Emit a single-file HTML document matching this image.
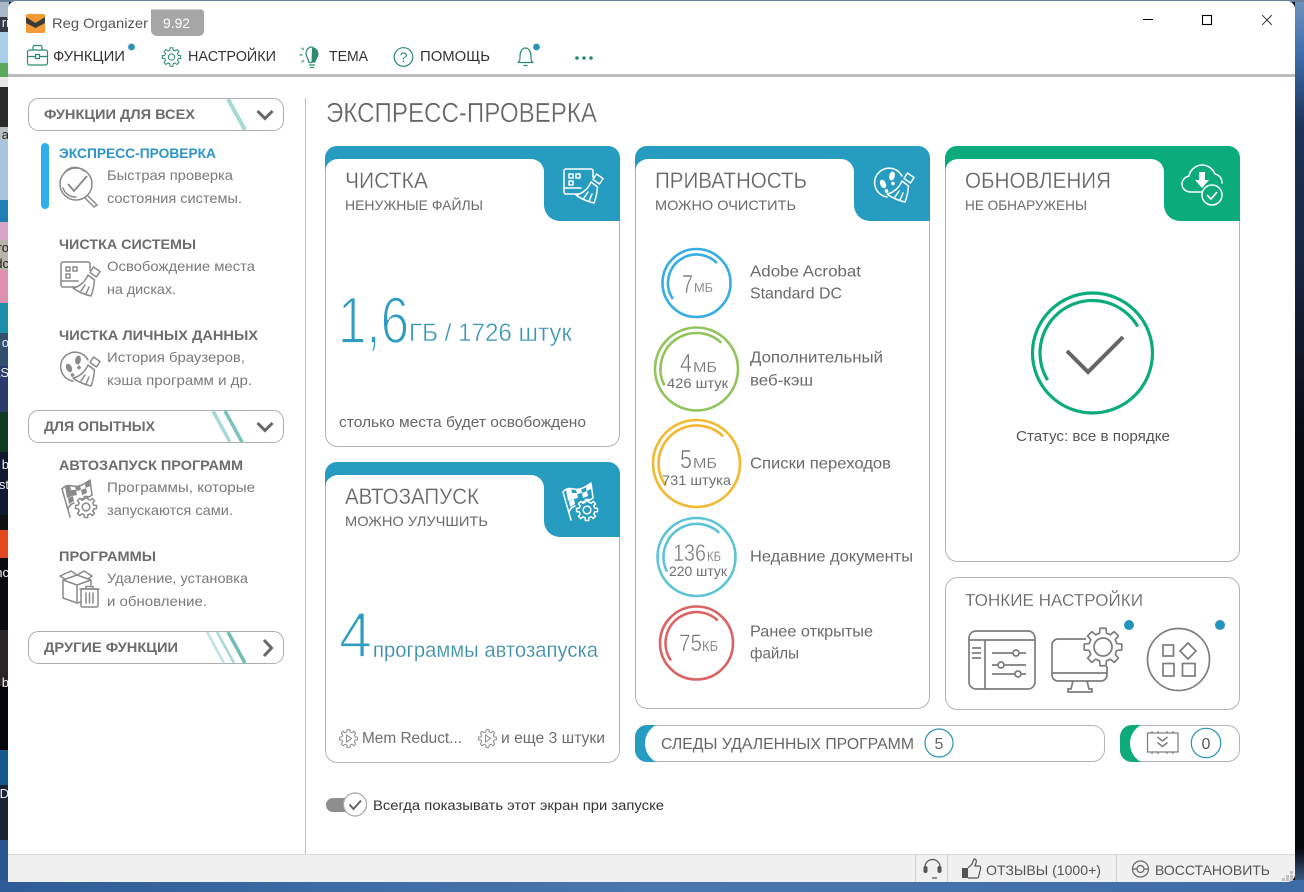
<!DOCTYPE html>
<html lang="ru"><head><meta charset="utf-8"><title>Reg Organizer</title>
<style>
html,body{margin:0;padding:0;width:1304px;height:892px;overflow:hidden;background:#0a1020}
svg{display:block;position:absolute;left:0;top:0}
text{font-family:"Liberation Sans",sans-serif;white-space:pre}
.m{font-size:15px;fill:#333;transform:translateY(-1px)}
.h{font-size:14px;font-weight:bold;fill:#6c6c6c;transform:translateY(-1px)}
.d{font-size:14px;fill:#7a7a7a}
.ct{font-size:22px;fill:#666;stroke:#fff;stroke-width:.25;transform:translateY(-1px)}
.cs{font-size:14px;fill:#6a6a6a;transform:translateY(-1px)}
.l{font-size:16px;fill:#6a6a6a;transform:translateY(-.6px)}
.n{fill:#777;stroke:#fff;stroke-width:.5}
.u{fill:#777;stroke:#fff;stroke-width:.15}
.sm{font-size:14px;fill:#666}
.ic{fill:none;stroke:currentColor;stroke-width:1.5;stroke-linejoin:round;stroke-linecap:round}
.nsc{vector-effect:non-scaling-stroke}
</style></head><body>
<svg width="1304" height="892" viewBox="0 0 1304 892" xmlns="http://www.w3.org/2000/svg">
<defs>
<linearGradient id="rs" x1="0" y1="0" x2="0" y2="1"><stop offset="0" stop-color="#6f92bd"/><stop offset=".06" stop-color="#3c6fae"/><stop offset=".14" stop-color="#1c3258"/><stop offset=".3" stop-color="#16243f"/><stop offset=".5" stop-color="#07090f"/><stop offset=".95" stop-color="#05060a"/><stop offset="1" stop-color="#4c78ae"/></linearGradient>
<linearGradient id="bs" x1="0" y1="0" x2="1" y2="0"><stop offset="0" stop-color="#2f5c98"/><stop offset=".5" stop-color="#4a78ad"/><stop offset="1" stop-color="#3e6ba6"/></linearGradient>
<path id="hdr" d="M0 12A12 12 0 0 1 12 0H283A12 12 0 0 1 295 12V75H235A16 16 0 0 1 219 59V26A13 13 0 0 0 206 13H13A13 13 0 0 0 0 26Z"/>
<path id="gear" class="nsc" fill="none" stroke="currentColor" stroke-linejoin="round" d="M7.28 -1.81L9.88 -1.56L9.88 1.56L7.28 1.81L6.43 3.86L8.09 5.88L5.88 8.09L3.86 6.43L1.81 7.28L1.56 9.88L-1.56 9.88L-1.81 7.28L-3.86 6.43L-5.88 8.09L-8.09 5.88L-6.43 3.86L-7.28 1.81L-9.88 1.56L-9.88 -1.56L-7.28 -1.81L-6.43 -3.86L-8.09 -5.88L-5.88 -8.09L-3.86 -6.43L-1.81 -7.28L-1.56 -9.88L1.56 -9.88L1.81 -7.28L3.86 -6.43L5.88 -8.09L8.09 -5.88L6.43 -3.86Z"/>
<g id="broom" class="ic">
<path d="M33.500 6L40 10.500L36.500 16L30 11.500Z"/><path d="M28 14L34.500 19C34 25 33 30 31 35C26 34 18 31 13 27C19 26 25 21 28 14Z"/><path d="M25 24L21 30M29 26L26 33"/>
</g>
<g id="iScreen">
<g class="ic"><path d="M16 26H3a2 2 0 0 1-2-2V3a2 2 0 0 1 2-2H28a2 2 0 0 1 2 2V9"/><path d="M1 20H18"/><rect x="6" y="6" width="4" height="4"/><rect x="13" y="6" width="4" height="4"/><rect x="6" y="13" width="4" height="4"/></g>
<use href="#broom"/>
</g>
<g id="iFoot">
<path class="ic" d="M13 30A14.500 14.500 0 1 1 28 9"/>
<g fill="currentColor" stroke="none"><ellipse cx="9" cy="17" rx="2.800" ry="4.500" transform="rotate(-25 9 17)"/><ellipse cx="12.500" cy="24" rx="1.800" ry="1.900"/><ellipse cx="18" cy="9" rx="2.800" ry="4.500" transform="rotate(12 18 9)"/><ellipse cx="19" cy="16.500" rx="1.800" ry="1.900"/></g>
<use href="#broom"/>
</g>
<g id="iFlag">
<path class="ic" d="M2 10L10 38M2 10C8 3 13 9 19 7C23 6 26 4 30 1L32 16C28 19 25 20 21 20M8 30C9 27 11 25 14 24"/>
<g fill="currentColor" stroke="none"><path d="M5 8l5-2l1 5l-5 2zM15 7l5-1l1 5l-5 1zM25 4l5-2l.500 5l-5 2zM11 11l5 0l1 5l-5 1zM21 11l5-2l1 5l-5 2zM6 13l5-2l1 6l-5 2zM8 19l5-2l1 5l-5 3z"/></g>
<g transform="translate(26 28) scale(1.060)"><use href="#gear" stroke-width="1.500"/><circle class="nsc" r="3.600" fill="none" stroke="currentColor" stroke-width="1.500"/></g>
</g>
</defs>

<!-- desktop behind -->
<rect width="1304" height="892" fill="#0c1426"/>
<rect x="0" y="0" width="9" height="17" fill="#a8b8c8"/><rect x="0" y="17" width="9" height="15" fill="#333a44"/><rect x="0" y="32" width="9" height="31" fill="#a9cfe8"/><rect x="0" y="63" width="9" height="14" fill="#5aa85c"/><rect x="0" y="77" width="9" height="10" fill="#e8e8e8"/><rect x="0" y="87" width="9" height="40" fill="#2a2a2a"/><rect x="0" y="127" width="9" height="13" fill="#b9bfc6"/><rect x="0" y="140" width="9" height="60" fill="#a9c4dc"/><rect x="0" y="200" width="9" height="22" fill="#1f7eb4"/><rect x="0" y="222" width="9" height="18" fill="#d9a6c8"/><rect x="0" y="240" width="9" height="30" fill="#b9b4a8"/><rect x="0" y="270" width="9" height="33" fill="#dc8fb0"/><rect x="0" y="303" width="9" height="30" fill="#1c90a8"/><rect x="0" y="333" width="9" height="33" fill="#33506e"/><rect x="0" y="366" width="9" height="46" fill="#2a3a6c"/><rect x="0" y="412" width="9" height="40" fill="#0f3a20"/><rect x="0" y="452" width="9" height="63" fill="#101830"/><rect x="0" y="515" width="9" height="15" fill="#111"/><rect x="0" y="530" width="9" height="28" fill="#e2491f"/><rect x="0" y="558" width="9" height="72" fill="#0a0a10"/><rect x="0" y="630" width="9" height="56" fill="#2b2426"/><rect x="0" y="686" width="9" height="64" fill="#06070c"/><rect x="0" y="750" width="9" height="35" fill="#165a8c"/><rect x="0" y="785" width="9" height="55" fill="#1a2434"/><rect x="0" y="840" width="9" height="52" fill="#2a5590"/>
<g font-size="13"><text x="9" y="27" text-anchor="end" fill="#eee">ri</text><text x="9" y="139" text-anchor="end" fill="#222">a</text><text x="9" y="252" text-anchor="end" fill="#222">ro</text><text x="9" y="268" text-anchor="end" fill="#222">dc</text><text x="9" y="347" text-anchor="end" fill="#eee">o</text><text x="9" y="377" text-anchor="end" fill="#eee">tS</text><text x="9" y="469" text-anchor="end" fill="#eee">b</text><text x="9" y="489" text-anchor="end" fill="#eee">st</text><text x="9" y="577" text-anchor="end" fill="#eee">nc</text><text x="9" y="687" text-anchor="end" fill="#eee">b</text><text x="9" y="798" text-anchor="end" fill="#eee">D</text></g>
<rect x="1295" y="0" width="9" height="892" fill="url(#rs)"/>
<rect x="0" y="880" width="1304" height="12" fill="url(#bs)"/>
<rect x="0" y="0" width="1304" height="2" fill="#6a7f9a"/>

<!-- window -->
<path d="M16 1H1287a8 8 0 0 1 8 8V874a8 8 0 0 1-8 8H8V9a8 8 0 0 1 8-8Z" fill="#fff"/>

<!-- title -->
<rect x="26" y="14" width="19" height="19" rx="1.500" fill="#f39a34"/>
<path d="M26 17l9.500 6l9.500-6v6l-9.500 5l-9.500-5z" fill="#3b3b3b"/>
<text x="52" y="28" font-size="14" fill="#555" textLength="96" lengthAdjust="spacingAndGlyphs">Reg Organizer</text>
<path d="M151 9.500H201a3 3 0 0 1 3 3V31a5 5 0 0 1-5 5H157a6 6 0 0 1-6-6Z" fill="#a6a6a6"/>
<text x="163" y="28" font-size="14" fill="#fff" textLength="27" lengthAdjust="spacingAndGlyphs">9.92</text>
<path d="M1143 19.500h10" stroke="#000" stroke-width="1"/>
<rect x="1202.500" y="15.500" width="9" height="9" fill="none" stroke="#000" stroke-width="1.100"/>
<path d="M1262 15l10 10M1272 15l-10 10" stroke="#111" stroke-width=".8"/>

<!-- menu -->
<g color="#2c8a72">
<g class="ic" stroke-width="1.200" style="stroke-width:1.200"><rect x="27.500" y="50" width="20" height="15" rx="2"/><path d="M33 50v-3a1.500 1.500 0 0 1 1.500-1.500h6a1.500 1.500 0 0 1 1.500 1.500v3M27.500 56.500h8M39.500 56.500h8"/><rect x="35.500" y="54.500" width="4" height="4"/></g>
<g transform="translate(171.500 57) scale(.93)" stroke-width="1"><use href="#gear"/><circle class="nsc" r="3.400" fill="none" stroke="currentColor"/></g>
<path d="M312 47c4 .500 6.500 3.500 6.500 7c0 3.500-2.700 5-3 8.500h-4z" fill="currentColor"/><path class="ic" style="stroke-width:1.200" d="M312 47c-3.500 0-6 3-6 6.500c0 3.500 2.500 5 3 9h3M309.500 65h5M310.500 67.500h3M302 48l1.500 1.500M300 55h2M302 62l1.500-1.500"/>
<g class="ic" style="stroke-width:1.200"><circle cx="403.500" cy="57" r="9.300"/></g>
<text x="403.500" y="62" font-size="14" text-anchor="middle" fill="#2c8a72">?</text>
<path class="ic" style="stroke-width:1.200" d="M518 62.500c2-1.500 2-3 2-6.500c0-4 2-8 5.500-8s5.500 4 5.500 8c0 3.500 0 5 2 6.500zM524 65.500h3"/>
<circle cx="577" cy="58" r="1.800" fill="currentColor"/><circle cx="584" cy="58" r="1.800" fill="currentColor"/><circle cx="591" cy="58" r="1.800" fill="currentColor"/>
</g>
<text class="m" x="53" y="62" textLength="72" lengthAdjust="spacingAndGlyphs">ФУНКЦИИ</text>
<circle cx="131.500" cy="47" r="3.400" fill="#2a93b8"/>
<text class="m" x="188" y="62" textLength="88" lengthAdjust="spacingAndGlyphs">НАСТРОЙКИ</text>
<text class="m" x="329" y="62" textLength="39" lengthAdjust="spacingAndGlyphs">ТЕМА</text>
<text class="m" x="420" y="62" textLength="70" lengthAdjust="spacingAndGlyphs">ПОМОЩЬ</text>
<circle cx="536.500" cy="47" r="3.400" fill="#2a93b8"/>
<rect x="8" y="74" width="1287" height="3" fill="#bcbcbc"/>

<!-- sidebar pills -->
<g fill="#fff" stroke="#aeaeae"><rect x="28.500" y="98.500" width="255" height="32" rx="10"/><rect x="28.500" y="410.500" width="255" height="32" rx="10"/><rect x="28.500" y="631.500" width="255" height="32" rx="10"/></g>
<path d="M228 99l17 31" stroke="#a9d9d5" stroke-width="4"/>
<path d="M213 411l17 31" stroke="#a9d9d5" stroke-width="3.500"/><path d="M225 411l17 31" stroke="#79c4bb" stroke-width="3.500"/>
<path d="M207 632l17 31" stroke="#bfe3df" stroke-width="2.500"/><path d="M217 632l17 31" stroke="#a9d9d5" stroke-width="2.500"/><path d="M228 632l17 31" stroke="#6fbfb5" stroke-width="3.500"/>
<g fill="none" stroke="#666" stroke-width="3"><path d="M257.500 111l7.500 7.500l7.500-7.500M257.500 423l7.500 7.500l7.500-7.500M264 640l7.500 8l-7.500 8"/></g>
<text class="h" x="44" y="120" textLength="151" lengthAdjust="spacingAndGlyphs">ФУНКЦИИ ДЛЯ ВСЕХ</text>
<text class="h" x="44" y="432" textLength="111" lengthAdjust="spacingAndGlyphs">ДЛЯ ОПЫТНЫХ</text>
<text class="h" x="44" y="653" textLength="134" lengthAdjust="spacingAndGlyphs">ДРУГИЕ ФУНКЦИИ</text>

<!-- sidebar items -->
<rect x="41" y="143" width="8" height="66" rx="4" fill="#2eaeea"/>
<text class="h" x="59" y="159" textLength="157" lengthAdjust="spacingAndGlyphs" style="fill:#2d95c8">ЭКСПРЕСС-ПРОВЕРКА</text>
<text class="d" x="107" y="180" textLength="126" lengthAdjust="spacingAndGlyphs">Быстрая проверка</text>
<text class="d" x="107" y="203" textLength="135" lengthAdjust="spacingAndGlyphs">состояния системы.</text>
<g color="#8a8a8a"><g class="ic"><circle cx="76" cy="184" r="16"/><path d="M65 172a13 13 0 0 1 19-1M63 188a13 13 0 0 0 13 9"/><path d="M88 196l9 9l-3 2l-9-9"/></g><path d="M68 184l6 7l13-15" fill="none" stroke="#888" stroke-width="1.800"/></g>

<text class="h" x="59" y="250" textLength="137" lengthAdjust="spacingAndGlyphs">ЧИСТКА СИСТЕМЫ</text>
<text class="d" x="107" y="271" textLength="148" lengthAdjust="spacingAndGlyphs">Освобождение места</text>
<text class="d" x="107" y="294" textLength="69" lengthAdjust="spacingAndGlyphs">на дисках.</text>
<use href="#iScreen" x="60" y="261" color="#8a8a8a"/>

<text class="h" x="59" y="341" textLength="199" lengthAdjust="spacingAndGlyphs">ЧИСТКА ЛИЧНЫХ ДАННЫХ</text>
<text class="d" x="107" y="362" textLength="138" lengthAdjust="spacingAndGlyphs">История браузеров,</text>
<text class="d" x="107" y="385" textLength="145" lengthAdjust="spacingAndGlyphs">кэша программ и др.</text>
<use href="#iFoot" x="60" y="351" color="#8a8a8a"/>

<text class="h" x="59" y="471" textLength="184" lengthAdjust="spacingAndGlyphs">АВТОЗАПУСК ПРОГРАММ</text>
<text class="d" x="107" y="492" textLength="148" lengthAdjust="spacingAndGlyphs">Программы, которые</text>
<text class="d" x="107" y="515" textLength="126" lengthAdjust="spacingAndGlyphs">запускаются сами.</text>
<use href="#iFlag" x="60" y="479" color="#8a8a8a"/>

<text class="h" x="59" y="562" textLength="97" lengthAdjust="spacingAndGlyphs">ПРОГРАММЫ</text>
<text class="d" x="107" y="583" textLength="141" lengthAdjust="spacingAndGlyphs">Удаление, установка</text>
<text class="d" x="107" y="606" textLength="100" lengthAdjust="spacingAndGlyphs">и обновление.</text>
<g color="#8a8a8a" class="ic"><path d="M63 580l14 5l14-5l-14-5zM63 580v18l14 5v-18M91 580v5M77 575l-6-4l-11 5l5 3M77 575l7-4l8 5l-4 3M77 603l4-1"/><rect x="81" y="589" width="17" height="18" rx="1.500"/><path d="M80 589h19M86 589v-2.500h7v2.500M86 593v10M89.500 593v10M93 593v10"/></g>

<rect x="305" y="98" width="1" height="756" fill="#bdbdbd"/>
<text x="326" y="122" font-size="28" fill="#666" stroke="#fff" stroke-width=".35" textLength="271" lengthAdjust="spacingAndGlyphs">ЭКСПРЕСС-ПРОВЕРКА</text>

<!-- cards -->
<g fill="#fff" stroke="#b4b4b4"><rect x="325.500" y="146.500" width="294" height="300" rx="12"/><rect x="325.500" y="462.500" width="294" height="300" rx="12"/><rect x="635.500" y="146.500" width="294" height="562" rx="12"/><rect x="945.500" y="146.500" width="294" height="415" rx="12"/><rect x="945.500" y="577.500" width="294" height="132" rx="12"/></g>
<use href="#hdr" x="325" y="146" fill="#269cc0"/>
<use href="#hdr" x="325" y="462" fill="#269cc0"/>
<use href="#hdr" x="635" y="146" fill="#269cc0"/>
<use href="#hdr" x="945" y="146" fill="#0bab7c"/>

<use href="#iScreen" x="563" y="168" color="#fff"/>
<use href="#iFlag" x="561" y="482" color="#fff"/>
<use href="#iFoot" x="874" y="167" color="#fff"/>
<g color="#fff"><path class="ic" d="M1202 192H1191C1186 192 1182 189 1182 184C1182 180 1185 177 1189 176C1190 170 1196 165 1202 165C1208 165 1213 169 1215 174C1219 175 1222 178 1222 183"/><path d="M1199 172h6v8h4l-7 8l-7-8h4z" fill="#fff"/><circle cx="1212" cy="195" r="10" fill="#0bab7c" stroke="#fff" stroke-width="1.500"/><path d="M1207 195l4 4l6-7" fill="none" stroke="#fff" stroke-width="1.700"/></g>

<text class="ct" x="345" y="189" textLength="83" lengthAdjust="spacingAndGlyphs">ЧИСТКА</text>
<text class="cs" x="345" y="211" textLength="138" lengthAdjust="spacingAndGlyphs">НЕНУЖНЫЕ ФАЙЛЫ</text>
<text x="338" y="343" font-size="66" fill="#2d9cc0" stroke="#fff" stroke-width="1.800" textLength="71" lengthAdjust="spacingAndGlyphs">1,6</text>
<text x="409" y="341" font-size="25" fill="#3b96b4" stroke="#fff" stroke-width=".4" textLength="163" lengthAdjust="spacingAndGlyphs">ГБ / 1726 штук</text>
<text x="339" y="427" font-size="15" fill="#666" textLength="247" lengthAdjust="spacingAndGlyphs">столько места будет освобождено</text>

<text class="ct" x="345" y="505" textLength="134" lengthAdjust="spacingAndGlyphs">АВТОЗАПУСК</text>
<text class="cs" x="345" y="527" textLength="143" lengthAdjust="spacingAndGlyphs">МОЖНО УЛУЧШИТЬ</text>
<text x="339" y="657" font-size="64" fill="#2d9cc0" stroke="#fff" stroke-width="1.800" textLength="33" lengthAdjust="spacingAndGlyphs">4</text>
<text x="373" y="657" font-size="21" fill="#3d8ea8" stroke="#fff" stroke-width=".2" textLength="225" lengthAdjust="spacingAndGlyphs">программы автозапуска</text>
<g color="#8a8a8a" stroke-width="1"><g transform="translate(348.500 738.500) scale(.9)"><use href="#gear"/></g><path d="M346.500 735l5 3.500l-5 3.500z" fill="none" stroke="#8a8a8a"/><g transform="translate(487.500 738.500) scale(.9)"><use href="#gear"/></g><path d="M485.500 735l5 3.500l-5 3.500z" fill="none" stroke="#8a8a8a"/></g>
<text x="362" y="743" font-size="15.500" fill="#6e6e6e" textLength="100" lengthAdjust="spacingAndGlyphs">Mem Reduct...</text>
<text x="501" y="743" font-size="15.500" fill="#6e6e6e" textLength="104" lengthAdjust="spacingAndGlyphs">и еще 3 штуки</text>

<!-- toggle -->
<rect x="326" y="798" width="30" height="14" rx="7" fill="#8e8e8e"/>
<circle cx="355" cy="804.500" r="11.500" fill="#fff" stroke="#a5a5a5" stroke-width="1.200"/>
<path d="M349.500 804.500l4 4.500l7.500-8.500" fill="none" stroke="#666" stroke-width="2"/>
<text x="373" y="810" font-size="14" fill="#333" textLength="291" lengthAdjust="spacingAndGlyphs">Всегда показывать этот экран при запуске</text>

<!-- privacy -->
<text class="ct" x="655" y="189" textLength="152" lengthAdjust="spacingAndGlyphs">ПРИВАТНОСТЬ</text>
<text class="cs" x="655" y="211" textLength="141" lengthAdjust="spacingAndGlyphs">МОЖНО ОЧИСТИТЬ</text>
<g fill="none" stroke-width="2.600">
<g stroke="#36aee3"><circle cx="696.500" cy="283" r="34"/><path d="M716.900 263.100A28.500 28.500 0 0 0 682.250 258.320A28.500 28.500 0 0 0 672.900 299"/></g>
<g stroke="#92c45c"><circle cx="696.500" cy="369" r="41.500"/><path d="M721.200 342.800A36 36 0 0 0 678.500 337.800A36 36 0 0 0 664.400 385.300"/></g>
<g stroke="#f3b82f"><circle cx="696.500" cy="463.500" r="43.500"/><path d="M723.100 436.300A38 38 0 0 0 677.500 430.600A38 38 0 0 0 665.600 485.600"/></g>
<g stroke="#5dc4d6"><circle cx="696.500" cy="557" r="39"/><path d="M719.200 532.800A33 33 0 0 0 680 528.400A33 33 0 0 0 667 571.700"/></g>
<g stroke="#dc6363"><circle cx="696.500" cy="643" r="36.500"/><path d="M717.800 620.500A31 31 0 0 0 681 616.200A31 31 0 0 0 670.900 660.500"/></g>
</g>
<text class="n" x="682" y="293" font-size="26" textLength="11" lengthAdjust="spacingAndGlyphs">7</text><text class="u" x="694" y="292" font-size="13" textLength="19" lengthAdjust="spacingAndGlyphs">МБ</text>
<text class="n" x="680" y="372" font-size="26" textLength="12" lengthAdjust="spacingAndGlyphs">4</text><text class="u" x="693" y="372" font-size="15" textLength="24" lengthAdjust="spacingAndGlyphs">МБ</text>
<text x="667" y="388" font-size="14" fill="#6e6e6e" textLength="61" lengthAdjust="spacingAndGlyphs">426 штук</text>
<text class="n" x="680" y="468" font-size="26" textLength="12" lengthAdjust="spacingAndGlyphs">5</text><text class="u" x="693" y="468" font-size="15" textLength="24" lengthAdjust="spacingAndGlyphs">МБ</text>
<text x="662" y="485" font-size="14" fill="#6e6e6e" textLength="69" lengthAdjust="spacingAndGlyphs">731 штука</text>
<text class="n" x="673" y="561" font-size="24" textLength="33" lengthAdjust="spacingAndGlyphs">136</text><text class="u" x="707" y="561" font-size="14" textLength="14" lengthAdjust="spacingAndGlyphs">КБ</text>
<text x="669" y="576" font-size="14" fill="#6e6e6e" textLength="58" lengthAdjust="spacingAndGlyphs">220 штук</text>
<text class="n" x="679" y="651" font-size="24" textLength="23" lengthAdjust="spacingAndGlyphs">75</text><text class="u" x="702" y="651" font-size="15" textLength="16" lengthAdjust="spacingAndGlyphs">КБ</text>
<text class="l" x="750" y="277" textLength="111" lengthAdjust="spacingAndGlyphs">Adobe Acrobat</text>
<text class="l" x="750" y="299" textLength="92" lengthAdjust="spacingAndGlyphs">Standard DC</text>
<text class="l" x="750" y="363" textLength="133" lengthAdjust="spacingAndGlyphs">Дополнительный</text>
<text class="l" x="750" y="386" textLength="63" lengthAdjust="spacingAndGlyphs">веб-кэш</text>
<text class="l" x="750" y="469" textLength="141" lengthAdjust="spacingAndGlyphs">Списки переходов</text>
<text class="l" x="750" y="562" textLength="163" lengthAdjust="spacingAndGlyphs">Недавние документы</text>
<text class="l" x="750" y="637" textLength="123" lengthAdjust="spacingAndGlyphs">Ранее открытые</text>
<text class="l" x="750" y="659" textLength="49" lengthAdjust="spacingAndGlyphs">файлы</text>

<!-- updates -->
<text class="ct" x="965" y="189" textLength="146" lengthAdjust="spacingAndGlyphs">ОБНОВЛЕНИЯ</text>
<text class="cs" x="965" y="211" textLength="122" lengthAdjust="spacingAndGlyphs">НЕ ОБНАРУЖЕНЫ</text>
<g fill="none" stroke="#0bab7c" stroke-width="3.200"><circle cx="1092.500" cy="353" r="60"/><path d="M1137.800 326.500A52.500 52.500 0 0 0 1066.250 307.500A52.500 52.500 0 0 0 1047.600 380.200"/></g>
<path d="M1067 351l21 21l35-35" fill="none" stroke="#666" stroke-width="4"/>
<text x="1016" y="441" font-size="15" fill="#555" textLength="154" lengthAdjust="spacingAndGlyphs">Статус: все в порядке</text>

<!-- tweaks -->
<text x="965" y="606" font-size="17.500" fill="#6a6a6a" stroke="#fff" stroke-width=".15" textLength="178" lengthAdjust="spacingAndGlyphs">ТОНКИЕ НАСТРОЙКИ</text>
<g fill="none" stroke="#7d7d7d" stroke-width="1.700">
<rect x="969" y="631" width="66" height="58" rx="7"/><path d="M969 640H1035M985 640V689M972 648h9M972 653h9M972 658h9"/>
<path d="M992 653h21M1019 653h7M992 665h6M1004 665h22M992 674h23M1021 674h5"/><circle cx="1016" cy="653" r="3"/><circle cx="1001" cy="665" r="3"/><circle cx="1018" cy="674" r="3"/>
<path d="M1086 639H1058a6 6 0 0 0-6 6V675a6 6 0 0 0 6 6H1101a6 6 0 0 0 6-6V666M1052 673H1107M1073 681l-2 8h-3v3h24v-3h-3l-2-8"/>
<circle cx="1103" cy="647" r="9"/>
<circle cx="1178.500" cy="659.500" r="31"/>
<rect x="1163" y="645" width="10.500" height="11"/><path d="M1188 643l8 8l-8 8l-8-8z"/><rect x="1163" y="663.500" width="11" height="12.500"/><rect x="1182.500" y="663.500" width="12.500" height="12.500"/>
</g>
<g transform="translate(1103 647) scale(1.900)" color="#7d7d7d" stroke-width="1.700"><use href="#gear"/></g>
<circle cx="1129" cy="625" r="5" fill="#2395bd"/><circle cx="1220" cy="625" r="5" fill="#2395bd"/>

<!-- bars -->
<rect x="635.500" y="725.500" width="469" height="36" rx="12" fill="#fff" stroke="#b4b4b4"/>
<path d="M656 725H647a12 12 0 0 0-12 12v13a12 12 0 0 0 12 12H656C649 758 645 751 645 743.500C645 736 649 729 656 725Z" fill="#269cc0"/>
<text x="661" y="749" font-size="16" fill="#666" textLength="253" lengthAdjust="spacingAndGlyphs">СЛЕДЫ УДАЛЕННЫХ ПРОГРАММ</text>
<circle cx="939" cy="743" r="14" fill="#fff" stroke="#2a92b8" stroke-width="1.200"/>
<text x="939" y="749" font-size="16" fill="#666" text-anchor="middle">5</text>
<rect x="1120.500" y="725.500" width="119" height="36" rx="12" fill="#fff" stroke="#b4b4b4"/>
<path d="M1141 725H1132a12 12 0 0 0-12 12v13a12 12 0 0 0 12 12H1141C1134 758 1130 751 1130 743.500C1130 736 1134 729 1141 725Z" fill="#0bab7c"/>
<g fill="none" stroke="#7d7d7d" stroke-width="1.200"><path d="M1147.500 733H1178V752H1147.500ZM1152 733v-2M1158 733v-2M1167 733v-2M1173 733v-2M1152 752v2M1158 752v2M1167 752v2M1173 752v2"/><path d="M1157.500 737l5 4l5-4M1157.500 742.500l5 4l5-4" stroke-width="1.500"/></g>
<circle cx="1206" cy="743" r="14.700" fill="#fff" stroke="#2a92b8" stroke-width="1.200"/>
<text x="1206" y="749" font-size="16" fill="#555" text-anchor="middle">0</text>

<!-- status bar -->
<path d="M8 854H1295V874a8 8 0 0 1-8 8H8Z" fill="#f0f0f0"/>
<rect x="8" y="854" width="1287" height="1" fill="#d9d9d9"/>
<g fill="#d2d2d2"><rect x="915" y="855" width="1" height="27"/><rect x="947" y="855" width="1" height="27"/><rect x="1116" y="855" width="1" height="27"/></g>
<path d="M925 870v-3a7.500 7.500 0 0 1 15 0v3M932 878h5" fill="none" stroke="#555" stroke-width="1.200"/><rect x="923.500" y="866" width="4" height="7" rx="2" fill="#555"/><rect x="937.500" y="866" width="4" height="7" rx="2" fill="#555"/>
<rect x="962" y="868" width="6" height="10" fill="#555"/>
<path d="M968 868l4-4l2-5c2 0 3 2 2 4l-1 3h4c1.500 0 2 1.500 1.500 3l-2 8c-.300 1-1 1-2 1H968" fill="none" stroke="#555" stroke-width="1.200"/>
<text x="986" y="875" font-size="14" fill="#555" textLength="115" lengthAdjust="spacingAndGlyphs">ОТЗЫВЫ (1000+)</text>
<circle cx="1140.500" cy="869" r="8" fill="none" stroke="#666" stroke-width="1.200"/><circle cx="1140.500" cy="869" r="3.500" fill="none" stroke="#666" stroke-width="1.200"/><path d="M1132.500 869h4.500M1144 869h4.500" stroke="#666" stroke-width="1.200"/>
<text x="1155" y="875" font-size="14" fill="#555" textLength="115" lengthAdjust="spacingAndGlyphs">ВОССТАНОВИТЬ</text>
<g fill="#c2c2c2"><rect x="1290" y="871" width="3" height="3"/><rect x="1286" y="875" width="3" height="3"/><rect x="1290" y="875" width="3" height="3"/><rect x="1282" y="878" width="3" height="3"/><rect x="1286" y="878" width="3" height="3"/><rect x="1290" y="878" width="3" height="3"/></g>
</svg>
</body></html>
